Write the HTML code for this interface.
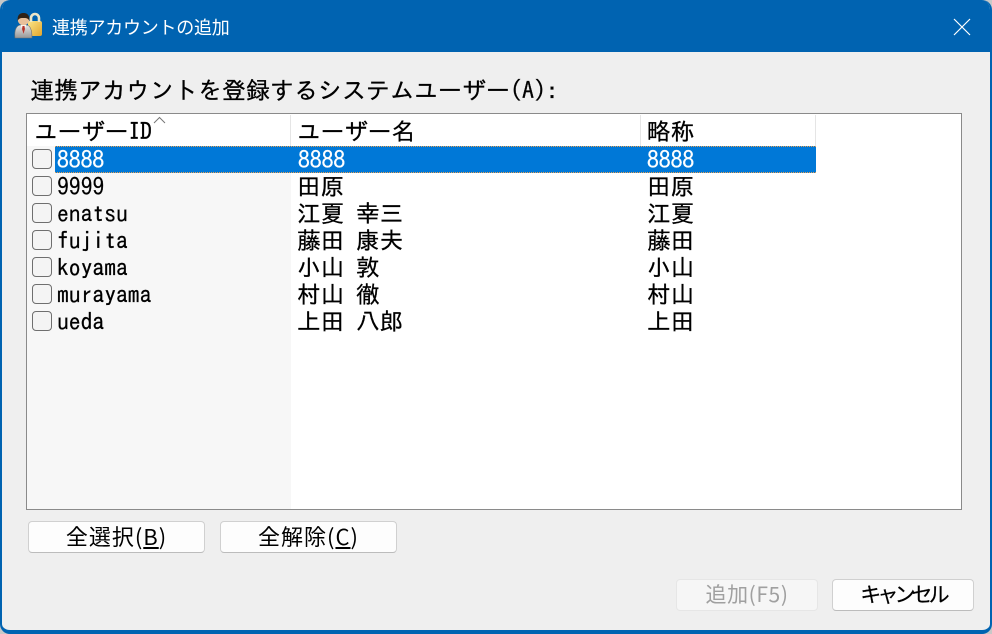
<!DOCTYPE html>
<html><head><meta charset="utf-8">
<style>
html,body{margin:0;padding:0;width:992px;height:634px;overflow:hidden;background:#c8c8c8}
#win{position:absolute;left:0;top:0;width:988px;height:630px;border:2px solid #0063b1;border-top:0;border-bottom:4px solid #0063b1;background:#efefef;border-radius:10px;overflow:hidden}
#title{position:absolute;left:-2px;top:0;width:992px;height:52px;background:#0063b1}
.t{position:absolute;white-space:pre;font-family:"IPAGothic","Liberation Mono",monospace;font-size:23.6px;line-height:27px;color:#000;-webkit-text-stroke:.25px currentColor}
.r{position:absolute;left:0;top:0}
.a{position:absolute}
.cb{position:absolute;left:32px;width:18px;height:18px;border:1px solid #6f6f6f;border-radius:4px;background:#f4f4f4}
.btn{position:absolute;box-sizing:border-box;border:1px solid #d0d0d0;border-bottom-color:#bcbcbc;border-radius:4px;background:#fdfdfd;height:32px;text-align:center;font-family:"Noto Sans CJK JP","Liberation Sans",sans-serif;font-size:22px;line-height:29px;color:#000;white-space:pre;letter-spacing:1px}
</style></head>
<body>
<div id="win">
<div id="title"></div>
</div>
<div class="r">
<svg class="a" style="left:14px;top:12px" width="30" height="28" viewBox="0 0 30 28">
<defs>
<linearGradient id="lk" x1="0" y1="0" x2="1" y2="1"><stop offset="0" stop-color="#fbe68a"/><stop offset="1" stop-color="#e2a52c"/></linearGradient>
<linearGradient id="bd" x1="0" y1="0" x2="0" y2="1"><stop offset="0" stop-color="#e4e4e4"/><stop offset="1" stop-color="#989898"/></linearGradient>
</defs>
<rect x="14" y="9" width="14" height="15" rx="2" fill="url(#lk)"/>
<path d="M17 10V6a4 4 0 0 1 8 0v4" fill="none" stroke="#ece6c8" stroke-width="2.6"/>
<path d="M1 26c-1-9 2-13 6-13h5c4 0 6 4 6 13z" fill="url(#bd)" stroke="#6d6d6d" stroke-width=".6"/>
<path d="M7 13h5l-2.500 9z" fill="#fff"/>
<path d="M8.500 14h2l.5 3-1.500 5-1.500-5z" fill="#b5342a"/>
<circle cx="9.500" cy="7.500" r="5.800" fill="#e8c09a"/>
<path d="M3.700 9C3 2 7 1 9.500 1s6.500 1 5.800 8c-1-3-3.500-3-5.800-3S4.700 6 3.700 9z" fill="#2f2216"/>
</svg>
<div class="t" style="left:52px;top:14px;color:#fff;font-family:'Noto Sans CJK JP','Liberation Sans',sans-serif;font-size:18px;line-height:27px;letter-spacing:-.25px;-webkit-text-stroke:0">連携アカウントの追加</div>
<svg class="a" style="left:953px;top:18px" width="18" height="18" viewBox="0 0 18 18"><path d="M1 1L17 17M17 1L1 17" stroke="#fff" stroke-width="1.200" fill="none"/></svg>

<div class="t" style="left:30px;top:77px;font-size:24px;line-height:27px">連携アカウントを登録するシステムユーザー(A):</div>

<div class="a" style="left:26px;top:113px;width:934px;height:395px;border:1px solid #8a8a8a;background:#fff"></div>
<div class="a" style="left:27px;top:146px;width:264px;height:363px;background:#f7f7f7"></div>
<div class="a" style="left:290px;top:115px;width:1px;height:31px;background:#e5e5e5"></div>
<div class="a" style="left:640px;top:115px;width:1px;height:31px;background:#e5e5e5"></div>
<div class="a" style="left:815px;top:115px;width:1px;height:31px;background:#e5e5e5"></div>
<div class="a" style="left:55px;top:146px;width:761px;height:27px;background:#0078d7;box-sizing:border-box;border-top:1px dotted #e8a050;border-bottom:1px dotted #e8a050"></div>

<div class="t" style="left:34px;top:118px">ユーザーID</div>
<svg class="a" style="left:153px;top:116px" width="13" height="8" viewBox="0 0 13 8"><path d="M1 7L6.500 1.500L12 7" fill="none" stroke="#777" stroke-width="1"/></svg>
<div class="t" style="left:297px;top:118px">ユーザー名</div>
<div class="t" style="left:647px;top:118px">略称</div>

<div class="cb" style="top:149px"></div>
<div class="cb" style="top:176px"></div>
<div class="cb" style="top:203px"></div>
<div class="cb" style="top:230px"></div>
<div class="cb" style="top:257px"></div>
<div class="cb" style="top:284px"></div>
<div class="cb" style="top:311px"></div>

<div class="t" style="left:57px;top:146px;color:#fff">8888</div>
<div class="t" style="left:298px;top:146px;color:#fff">8888</div>
<div class="t" style="left:647px;top:146px;color:#fff">8888</div>

<div class="t" style="left:57px;top:173px">9999</div>
<div class="t" style="left:297px;top:173px">田原</div>
<div class="t" style="left:647px;top:173px">田原</div>

<div class="t" style="left:57px;top:200px">enatsu</div>
<div class="t" style="left:297px;top:200px">江夏 幸三</div>
<div class="t" style="left:647px;top:200px">江夏</div>

<div class="t" style="left:57px;top:227px">fujita</div>
<div class="t" style="left:297px;top:227px">藤田 康夫</div>
<div class="t" style="left:647px;top:227px">藤田</div>

<div class="t" style="left:57px;top:254px">koyama</div>
<div class="t" style="left:297px;top:254px">小山 敦</div>
<div class="t" style="left:647px;top:254px">小山</div>

<div class="t" style="left:57px;top:281px">murayama</div>
<div class="t" style="left:297px;top:281px">村山 徹</div>
<div class="t" style="left:647px;top:281px">村山</div>

<div class="t" style="left:57px;top:308px">ueda</div>
<div class="t" style="left:297px;top:308px">上田 八郎</div>
<div class="t" style="left:647px;top:308px">上田</div>

<div class="btn" style="left:28px;top:521px;width:178px;width:177px">全選択(<u>B</u>)</div>
<div class="btn" style="left:220px;top:521px;width:177px">全解除(<u>C</u>)</div>
<div class="btn" style="left:676px;top:579px;width:142px;background:#f6f6f6;border-color:#e6e6e6;color:#a0a0a0;font-size:21px;letter-spacing:.6px">追加(F5)</div>
<div class="btn" style="left:832px;top:579px;width:142px;font-size:21px;letter-spacing:-3.900px;-webkit-text-stroke:.2px #000">キャンセル</div>
</div>
</body></html>
